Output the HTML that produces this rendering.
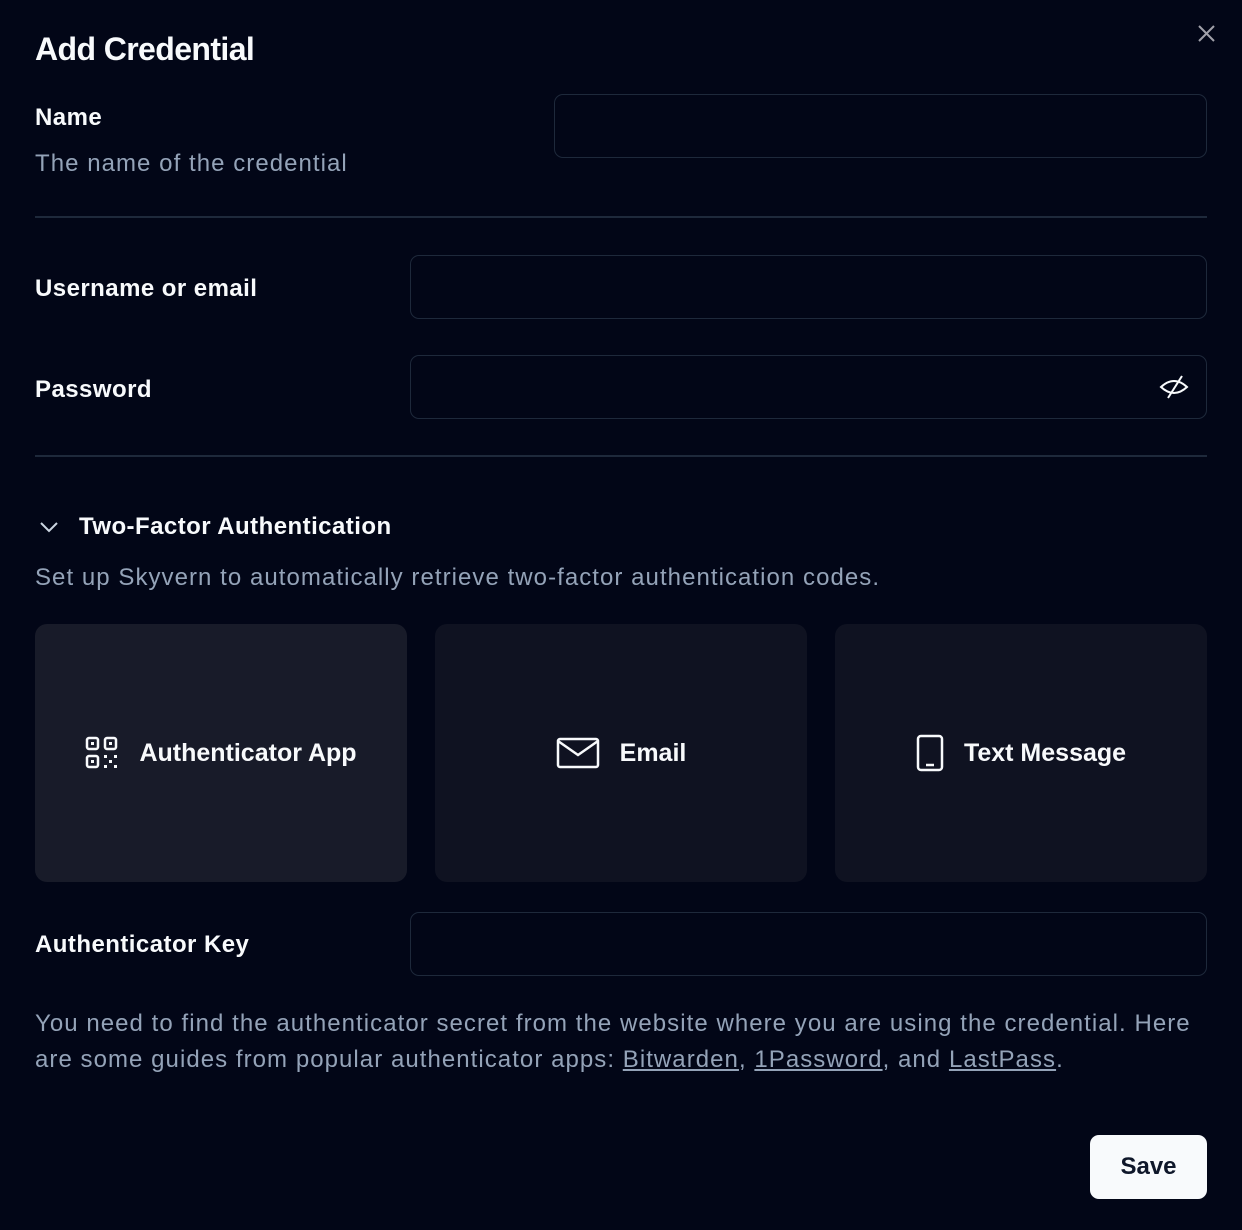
<!DOCTYPE html>
<html><head><meta charset="utf-8"><style>
*{box-sizing:border-box;margin:0;padding:0}
body{width:1242px;height:1230px;background:#020617;font-family:"Liberation Sans",sans-serif;color:#f8fafc;position:relative;overflow:hidden}
.a{position:absolute}
.lbl{font-size:24px;font-weight:bold;color:#f8fafc;letter-spacing:0.45px}
.muted{color:#94a3b8;font-size:24px;letter-spacing:1.05px}
.inp{position:absolute;border:1.5px solid #1e293b;border-radius:9px;background:#020617}
.sep{position:absolute;left:35px;width:1172px;height:2px;background:#1e293b}
.card{position:absolute;top:624px;width:372px;height:258px;border-radius:12px;background:#0f1221;display:flex;align-items:center;justify-content:center;gap:20px;font-size:25px;font-weight:bold}
a{color:#94a3b8;text-decoration:underline}
</style></head><body>
<div class="a" style="left:35px;top:31px;font-size:32px;font-weight:bold;letter-spacing:-0.6px">Add Credential</div>
<svg class="a" style="left:1196px;top:23px" width="21" height="21" viewBox="0 0 21 21"><path d="M3 3L18 18M18 3L3 18" stroke="#a1a1aa" stroke-width="2"/></svg>
<div class="a lbl" style="left:35px;top:104px">Name</div>
<div class="a muted" style="left:35px;top:150px">The name of the credential</div>
<div class="inp" style="left:554px;top:94px;width:653px;height:64px"></div>
<div class="sep" style="top:216px"></div>
<div class="a lbl" style="left:35px;top:275px">Username or email</div>
<div class="inp" style="left:410px;top:255px;width:797px;height:64px"></div>
<div class="a lbl" style="left:35px;top:376px">Password</div>
<div class="inp" style="left:410px;top:355px;width:797px;height:64px"></div>
<svg class="a" style="left:1158px;top:373px" width="32" height="28" viewBox="0 0 32 28"><path d="M3 14Q16 2 29 14Q16 26 3 14Z" fill="none" stroke="#f8fafc" stroke-width="2"/><path d="M10 25L24 3" stroke="#f8fafc" stroke-width="2"/></svg>
<div class="sep" style="top:455px"></div>
<svg class="a" style="left:39px;top:520px" width="20" height="14" viewBox="0 0 20 14"><path d="M2 3L10 11L18 3" fill="none" stroke="#cbd5e1" stroke-width="2"/></svg>
<div class="a lbl" style="left:79px;top:513px">Two-Factor Authentication</div>
<div class="a muted" style="left:35px;top:564px">Set up Skyvern to automatically retrieve two-factor authentication codes.</div>
<div class="card" style="left:35px;background:#181b29">
<svg width="34" height="34" viewBox="0 0 34 34" fill="none" stroke="#f8fafc" stroke-width="2.5"><rect x="2" y="2" width="11" height="11" rx="2"/><rect x="6" y="6" width="3" height="3" fill="#f8fafc" stroke="none"/><rect x="20" y="2" width="11" height="11" rx="2"/><rect x="24" y="6" width="3" height="3" fill="#f8fafc" stroke="none"/><rect x="2" y="20" width="11" height="11" rx="2"/><rect x="6" y="24" width="3" height="3" fill="#f8fafc" stroke="none"/><g fill="#f8fafc" stroke="none"><rect x="19" y="19" width="3" height="3"/><rect x="29" y="19" width="3" height="3"/><rect x="24" y="24" width="3" height="3"/><rect x="19" y="29" width="3" height="3"/><rect x="29" y="29" width="3" height="3"/></g></svg>
<span>Authenticator App</span></div>
<div class="card" style="left:435px">
<svg width="44" height="32" viewBox="0 0 44 32" fill="none" stroke="#f8fafc" stroke-width="2.5"><rect x="2" y="2" width="40" height="28" rx="2"/><path d="M2 4L22 18L42 4"/></svg>
<span>Email</span></div>
<div class="card" style="left:835px">
<svg width="28" height="38" viewBox="0 0 28 38" fill="none" stroke="#f8fafc" stroke-width="2.5"><rect x="2" y="2" width="24" height="34" rx="3"/><path d="M10 31H18"/></svg>
<span>Text Message</span></div>
<div class="a lbl" style="left:35px;top:931px">Authenticator Key</div>
<div class="inp" style="left:410px;top:912px;width:797px;height:64px"></div>
<div class="a muted" style="left:35px;top:1006px;width:1180px;line-height:36px">You need to find the authenticator secret from the website where you are using the credential. Here are some guides from popular authenticator apps: <a>Bitwarden</a>, <a>1Password</a>, and <a>LastPass</a>.</div>
<div class="a" style="left:1090px;top:1135px;width:117px;height:64px;background:#f8fafc;border-radius:9px;color:#0f172a;font-size:24px;font-weight:bold;display:flex;align-items:center;justify-content:center">Save</div>
</body></html>
